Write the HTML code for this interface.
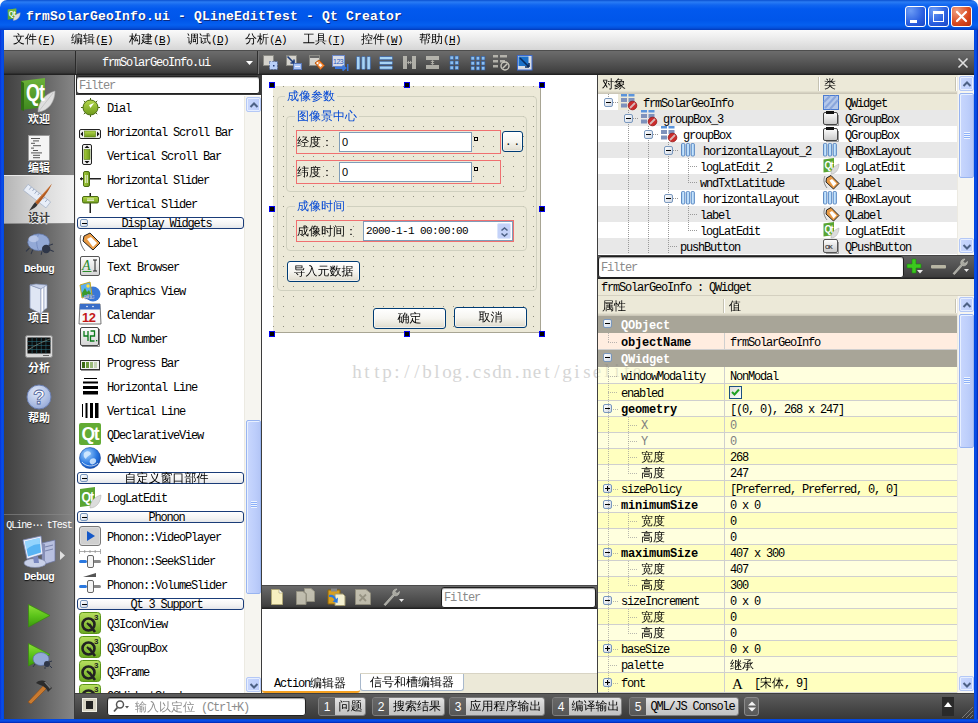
<!DOCTYPE html>
<html><head><meta charset="utf-8"><title>Qt Creator</title>
<style>
*{box-sizing:border-box;margin:0;padding:0}
html,body{width:978px;height:723px;overflow:hidden;background:#fff}
body{font:12px/14px "Liberation Mono","WenQuanYi Zen Hei",monospace;letter-spacing:-1.2px;color:#000;position:relative}
.a{position:absolute}
.c{letter-spacing:0}
.nw{white-space:nowrap}
svg{position:absolute;overflow:visible}
/* title */
#title{left:0;top:0;width:978px;height:30px;background:linear-gradient(#0a50d0 0,#2a7cf4 2px,#1166f0 5px,#0259ee 9px,#0056ea 20px,#0560f0 25px,#0450dc 28px,#0339b8 30px);border-radius:7px 7px 0 0}
#title .t{left:26px;top:9px;color:#fff;font:bold 13px/16px "Liberation Mono","WenQuanYi Zen Hei",monospace;letter-spacing:0.2px;text-shadow:1px 1px 0 #0a2a80;white-space:nowrap}
.tb{top:6px;width:21px;height:21px;border:1px solid #fff;border-radius:3px;background:radial-gradient(circle at 25% 20%,#6c9cf5,#2a5fe0 60%,#1b47c4)}
#frameL{left:0;top:30px;width:4px;height:693px;background:linear-gradient(90deg,#0831d9,#0a50e8 50%,#0046e0)}
#frameR{left:974px;top:30px;width:4px;height:693px;background:linear-gradient(90deg,#0046e0,#0a50e8 50%,#0025b0)}
#frameB{left:0;top:719px;width:978px;height:4px;background:linear-gradient(#0046e0,#0a50e8 50%,#0025b0)}
#menubar{left:4px;top:30px;width:970px;height:20px;background:linear-gradient(#fafafa,#ebebeb 45%,#d6d6d6)}
#menubar span.m{position:absolute;top:3px;white-space:nowrap}
#toolbar{left:4px;top:50px;width:970px;height:25px;background:linear-gradient(#2e2e2e 0,#6c6c6c 1px,#5a5a5a 40%,#444 80%,#3a3a3a 23px,#222 24px)}
#side{left:4px;top:75px;width:71px;height:644px;background:linear-gradient(90deg,#404040,#606060 50%,#858585 69.5px,#3a3a3a 70px)}
#side .lbl{position:absolute;left:0;width:70px;text-align:center;color:#fff;font-weight:bold;font-size:11px;line-height:12px;text-shadow:0 1px 1px #1a1a1a;letter-spacing:-0.6px}
#side .lbl .c{letter-spacing:0}
#status{left:75px;top:693px;width:899px;height:26px;background:linear-gradient(#202020 0,#5c5c5c 1px,#4a4a4a 50%,#383838)}
#wbox{left:76px;top:75px;width:185px;box-shadow:-1px 0 0 #f0f0f0;height:618px;background:#fff;overflow:hidden}
.filt{background:#fff;border:1px solid #1e1e1e;border-radius:3px;box-shadow:inset 0 1px 1px #999;color:#8a8a8a;padding-left:2px;padding-top:1px}
.wi{position:absolute;left:31px;white-space:nowrap;line-height:14px;margin-top:2px}
.wh{position:absolute;left:1px;width:167px;height:12px;border:1px solid #1a3c78;border-radius:3px;background:linear-gradient(#fff,#f4f4f4 60%,#e4e6ea);text-align:center;line-height:13px;padding-left:12px;white-space:nowrap}
.pm{position:absolute;width:9px;height:9px;border:1px solid #7a98be;border-radius:2px;background:linear-gradient(135deg,#fff,#d0d8e4)}
.pm:before{content:"";position:absolute;left:1px;top:3px;width:5px;height:1px;background:#000}
.pm.plus:after{content:"";position:absolute;left:3px;top:1px;width:1px;height:5px;background:#000}
.sb{position:absolute;width:17px;background:#f6f5f0;border-left:1px solid #eceae2}
.sbb{position:absolute;left:1px;width:15px;height:15px;border:1px solid #b4c8f6;border-radius:2px;background:linear-gradient(90deg,#cad8fd,#bccdfb);box-shadow:inset 0 0 0 1px #e6eeff}
.sbt{position:absolute;left:1px;width:15px;border:1px solid #98b4f0;border-radius:2px;background:linear-gradient(90deg,#c9d7fd,#bdcefb 60%,#b4c6f6);box-shadow:inset 1px 1px 0 #e8f0ff}
#canvas{left:262px;top:75px;width:335px;height:510px;background:#fff;overflow:hidden}
.hd{position:absolute;width:6px;height:6px;background:#000;border:1px solid #0000f0}
#form{position:absolute;left:11px;top:11px;width:268px;height:247px;background-color:#ece9d8;background-image:radial-gradient(circle at 0.5px 0.5px,#8f8d7e 0.5px,transparent 0.85px);background-size:10px 10px;border-right:1px solid #a8a594;border-bottom:1px solid #a8a594}
.gb{position:absolute;border:1px solid #d0d0bf;border-radius:4px}
.gbt{position:absolute;background:#ece9d8;color:#0046d5;padding:0 2px;line-height:14px;height:12px;white-space:nowrap;letter-spacing:0}
.red{position:absolute;border:1px solid #f07070}
.le{position:absolute;background:#fff;border:1px solid #7f9db9;font:11px/19px "Liberation Mono",monospace;letter-spacing:-0.6px;padding-left:2px;white-space:nowrap}
.btn{position:absolute;border:1px solid #003c74;border-radius:3px;background:linear-gradient(#fff,#f6f5f0 50%,#e4e1d4 90%,#d6d0c5);text-align:center;letter-spacing:0;white-space:nowrap;box-shadow:inset 0 0 0 1px rgba(255,255,255,.6)}
#aed{left:262px;top:585px;width:335px;height:108px;background:#fff}
#aed .tbar{position:absolute;left:0;top:0;width:335px;height:24px;background:linear-gradient(#2a2a2a 0,#6a6a6a 1px,#585858 40%,#444 80%,#3a3a3a 22px,#222 23px)}
#aed .tabs{position:absolute;left:0;top:88px;width:335px;height:20px;background:#ece9d8;border-top:1px solid #d8d4c4}
#right{left:597px;top:75px;width:377px;height:618px;background:#fff;border-left:1px solid #404040;overflow:hidden}
.hdr{position:absolute;left:0;width:376px;background:linear-gradient(#ece9d8 0,#ece9d8 calc(100% - 3px),#e2dfce calc(100% - 3px),#e2dfce calc(100% - 2px),#d6d2c2 calc(100% - 2px),#d6d2c2 calc(100% - 1px),#cbc7b8 calc(100% - 1px))}
.hdr .c{position:absolute;top:3px}
.hdr i{position:absolute;top:2px;width:2px;height:14px;border-left:1px solid #c5c2b2;border-right:1px solid #fff}
.tr{position:absolute;left:0;width:359px;height:16px;line-height:16px;white-space:nowrap}
.tr span{position:absolute;top:1px;line-height:14px}
.vd{position:absolute;width:1px;background-image:linear-gradient(#999 50%,transparent 50%);background-size:1px 2px}
.hdl{position:absolute;height:1px;background-image:linear-gradient(90deg,#999 50%,transparent 50%);background-size:2px 1px}
.pr{position:absolute;left:0;width:359px;white-space:nowrap;border-bottom:1px solid #cfcfcf}
.pr>span{position:absolute;line-height:14px;margin-top:1px}
.pr i{position:absolute;left:126px;top:0;bottom:0;width:1px;background:#cfcfcf}

.t1{margin-top:2px}
.sl{font-family:"Liberation Mono","Noto Sans CJK SC",sans-serif}
.wm{font:19px/20px "Liberation Serif",serif;letter-spacing:0;color:#d6d6d6}
.wm b{display:inline-block;width:10px;text-align:center;font-weight:normal}

</style></head><body>
<div class="a" id="title"><div class="a t">frmSolarGeoInfo.ui - QLineEditTest - Qt Creator</div>
<svg style="left:7px;top:8px" width="14" height="14" viewBox="0 0 18 18"><path d="M1 2 L12 0.5 L12 13 L1 15Z" fill="#5aa532"/><path d="M1 2 L12 0.5 L12 4 L1 6Z" fill="#7cc04a" opacity=".6"/><path d="M8 16 C8 11 12 7 17 6 C17 11 14 16 8 16Z" fill="#dcdcdc" stroke="#999" stroke-width=".5"/><text x="2.2" y="10.5" font-family="Liberation Sans,sans-serif" font-weight="bold" font-size="8.5" fill="#fff" letter-spacing="-0.6">Qt</text></svg>
<div class="a tb" style="left:905px"><div class="a" style="left:4px;top:13px;width:7px;height:3px;background:#fff"></div></div>
<div class="a tb" style="left:928px"><div class="a" style="left:4px;top:4px;width:11px;height:11px;border:1px solid #fff;border-top-width:3px"></div></div>
<div class="a tb" style="left:951px;background:radial-gradient(circle at 25% 20%,#f0a080,#d8481e 60%,#b8300c)"><svg style="left:3px;top:3px" width="13" height="13" viewBox="0 0 13 13"><path d="M2 2 L11 11 M11 2 L2 11" stroke="#fff" stroke-width="2.2" stroke-linecap="round"/></svg></div></div>
<div class="a" id="frameL"></div><div class="a" id="frameR"></div><div class="a" id="frameB"></div>
<div class="a" id="menubar"><span class="m" style="left:9px"><span class="c">文件</span><span style="font-size:11px;letter-spacing:-0.6px">(<u>F</u>)</span></span><span class="m" style="left:67px"><span class="c">编辑</span><span style="font-size:11px;letter-spacing:-0.6px">(<u>E</u>)</span></span><span class="m" style="left:125px"><span class="c">构建</span><span style="font-size:11px;letter-spacing:-0.6px">(<u>B</u>)</span></span><span class="m" style="left:183px"><span class="c">调试</span><span style="font-size:11px;letter-spacing:-0.6px">(<u>D</u>)</span></span><span class="m" style="left:241px"><span class="c">分析</span><span style="font-size:11px;letter-spacing:-0.6px">(<u>A</u>)</span></span><span class="m" style="left:299px"><span class="c">工具</span><span style="font-size:11px;letter-spacing:-0.6px">(<u>T</u>)</span></span><span class="m" style="left:357px"><span class="c">控件</span><span style="font-size:11px;letter-spacing:-0.6px">(<u>W</u>)</span></span><span class="m" style="left:415px"><span class="c">帮助</span><span style="font-size:11px;letter-spacing:-0.6px">(<u>H</u>)</span></span></div>
<div class="a" id="toolbar"></div>
<div class="a" id="side"></div>
<div class="a" id="status"></div>
<div class="a nw" style="left:102px;top:56px;color:#fff;line-height:14px">frmSolarGeoInfo.ui</div><svg style="left:246px;top:61px" width="7" height="4"><path d="M0 0H7L3.5 4Z" fill="#fff"/></svg><div class="a" style="left:75px;top:51px;width:1px;height:23px;background:#2a2a2a"></div><div class="a" style="left:76px;top:51px;width:1px;height:23px;background:#6a6a6a;opacity:.5"></div><div class="a" style="left:257px;top:51px;width:1px;height:23px;background:#2e2e2e"></div><div class="a" style="left:258px;top:51px;width:1px;height:23px;background:#747474"></div><svg style="left:263px;top:55px" width="17" height="16" viewBox="0 0 17 16"><rect x="0.5" y="0.5" width="10" height="10" fill="#d4d2cc" stroke="#8a8a84"/><rect x="6.5" y="6.5" width="8" height="8" fill="#b9d0f8" stroke="#34508c" stroke-dasharray="1 2"/><rect x="10" y="10" width="1.5" height="1.5" fill="#223a78"/></svg><svg style="left:286px;top:55px" width="16" height="16" viewBox="0 0 16 16"><rect x="0.5" y="0.5" width="10" height="10" fill="#d4d2cc" stroke="#8a8a84"/><rect x="7.5" y="8.5" width="8" height="6" fill="#a9c4f5" stroke="#5a78b8"/><rect x="9" y="11" width="5" height="1" fill="#eef"/><path d="M1.5 1.5L8 8M8 8V4.5M8 8H4.500" stroke="#1e3c78" stroke-width="1.6" fill="none"/></svg><svg style="left:309px;top:55px" width="16" height="16" viewBox="0 0 16 16"><rect x="0.500" y="0.5" width="10" height="10" fill="#d4d2cc" stroke="#8a8a84"/><rect x="1" y="1" width="9" height="2" fill="#666"/><path d="M6 8L10 5L15.500 10.500L11.500 14.500Z" fill="#f08a3c" stroke="#c05a10"/><circle cx="8.5" cy="8" r="1" fill="#fff"/><rect x="10" y="9" width="3" height="2.5" fill="#fff" transform="rotate(45 11.5 10)"/></svg><svg style="left:332px;top:55px" width="17" height="16" viewBox="0 0 17 16"><rect x="0.5" y="0.5" width="12" height="11" fill="#d8dce6" stroke="#6a86c8"/><text x="1" y="9" font-family="Liberation Sans,sans-serif" font-size="7" fill="#2858c0" letter-spacing="-0.5">123</text><path d="M3 13H13M10.500 10.500L13.500 13L10.500 15.500" stroke="#3c78dc" stroke-width="1.8" fill="none"/><rect x="15" y="9" width="1.5" height="7" fill="#3c78dc"/></svg><svg style="left:356px;top:56px" width="15" height="14" viewBox="0 0 15 14"><g fill="#a8d4f4" stroke="#3c64a4" stroke-width=".8"><rect x="0.5" y="0.5" width="3.5" height="13" rx="1"/><rect x="5.700" y="0.5" width="3.5" height="13" rx="1"/><rect x="10.900" y="0.5" width="3.500" height="13" rx="1"/></g></svg><svg style="left:379px;top:56px" width="14" height="14" viewBox="0 0 14 14"><g fill="#a8d4f4" stroke="#3c64a4" stroke-width=".8"><rect x="0.5" y="0.5" width="13" height="3.2" rx="1"/><rect x="0.5" y="5.3" width="13" height="3.2" rx="1"/><rect x="0.5" y="10.100" width="13" height="3.2" rx="1"/></g></svg><svg style="left:403px;top:56px" width="14" height="14" viewBox="0 0 14 14"><g opacity=".7" fill="#d8d6cc"><rect x="0" y="0" width="4" height="13"/><rect x="9" y="0" width="4" height="13"/><path d="M4 6.500L6 4.500V8.500ZM9 6.500L7 4.500V8.500Z"/><rect x="5" y="6" width="3" height="1"/></g></svg><svg style="left:426px;top:56px" width="14" height="14" viewBox="0 0 14 14"><g opacity=".7" fill="#d8d6cc"><rect x="0" y="0" width="13" height="4"/><rect x="0" y="9" width="13" height="4"/><path d="M6.500 4L4.500 6H8.500ZM6.500 9L4.500 7H8.500Z"/><rect x="6" y="5" width="1" height="3"/></g></svg><svg style="left:450px;top:56px" width="10" height="15" viewBox="0 0 10 15"><rect x="0" y="0" width="3.5" height="3.5" fill="#8cc0f0" stroke="#3060a8" stroke-width=".6"/><rect x="5" y="0" width="3.5" height="3.5" fill="#8cc0f0" stroke="#3060a8" stroke-width=".6"/><rect x="0" y="5" width="3.5" height="3.5" fill="#8cc0f0" stroke="#3060a8" stroke-width=".6"/><rect x="5" y="5" width="3.5" height="3.5" fill="#8cc0f0" stroke="#3060a8" stroke-width=".6"/><rect x="0" y="10" width="3.5" height="3.5" fill="#8cc0f0" stroke="#3060a8" stroke-width=".6"/><rect x="5" y="10" width="3.5" height="3.5" fill="#8cc0f0" stroke="#3060a8" stroke-width=".6"/></svg><svg style="left:471px;top:56px" width="15" height="15" viewBox="0 0 15 15"><rect x="0.0" y="0.5" width="3.5" height="3.5" fill="#8cc0f0" stroke="#3060a8" stroke-width=".6"/><rect x="5.2" y="0.5" width="3.5" height="3.5" fill="#8cc0f0" stroke="#3060a8" stroke-width=".6"/><rect x="10.4" y="0.5" width="3.5" height="3.5" fill="#8cc0f0" stroke="#3060a8" stroke-width=".6"/><rect x="0.0" y="5.5" width="3.5" height="3.5" fill="#8cc0f0" stroke="#3060a8" stroke-width=".6"/><rect x="5.2" y="5.5" width="3.5" height="3.5" fill="#8cc0f0" stroke="#3060a8" stroke-width=".6"/><rect x="10.4" y="5.5" width="3.5" height="3.5" fill="#8cc0f0" stroke="#3060a8" stroke-width=".6"/><rect x="0.0" y="10.5" width="3.5" height="3.5" fill="#8cc0f0" stroke="#3060a8" stroke-width=".6"/><rect x="5.2" y="10.5" width="3.5" height="3.5" fill="#8cc0f0" stroke="#3060a8" stroke-width=".6"/><rect x="10.4" y="10.5" width="3.5" height="3.5" fill="#8cc0f0" stroke="#3060a8" stroke-width=".6"/></svg><svg style="left:493px;top:55px" width="17" height="16" viewBox="0 0 17 16"><g opacity=".7" fill="#d8d6cc"><rect x="0" y="0" width="5" height="2.500"/><rect x="7" y="0" width="7" height="2.500"/><rect x="0" y="5" width="5" height="2.5"/><rect x="7" y="5" width="5" height="2.5"/><rect x="0" y="10" width="5" height="2.5"/></g><circle cx="12" cy="11" r="4" fill="none" stroke="#c8c6bc" stroke-width="1.4"/><path d="M9.500 13.500L14.500 8.500" stroke="#c8c6bc" stroke-width="1.4"/></svg><svg style="left:517px;top:55px" width="16" height="16" viewBox="0 0 16 16"><rect x="0.5" y="0.5" width="14.500" height="14.500" fill="#d8dce4" stroke="#3a6ad0"/><rect x="1.500" y="1.5" width="10" height="9.500" fill="#1a70c8"/><path d="M3 3L12 12M12 12V8M12 12H8" stroke="#0a2c60" stroke-width="1.6" fill="none"/></svg><svg style="left:958px;top:58px" width="10" height="10"><path d="M0.5 0.500L9.500 9.500M9.500 .5L.5 9.500" stroke="#e0e0e0" stroke-width="1.6"/></svg>
<div class="a" style="left:4px;top:175px;width:70px;height:49px;background:linear-gradient(90deg,#b4b4b4,#d8d8d8 50%,#efefef);border-top:1px solid #e8e8e8;border-bottom:1px solid #8a8a8a"></div><div class="a nw sl" style="left:4px;top:114px;width:70px;text-align:center;font-weight:bold;font-size:11px;line-height:12px;color:#fff;text-shadow:0 1px 1px #111;letter-spacing:-0.6px"><span class="c">欢迎</span></div><div class="a nw sl" style="left:4px;top:163px;width:70px;text-align:center;font-weight:bold;font-size:11px;line-height:12px;color:#fff;text-shadow:0 1px 1px #111;letter-spacing:-0.6px"><span class="c">编辑</span></div><div class="a nw sl" style="left:4px;top:213px;width:70px;text-align:center;font-weight:bold;font-size:11px;line-height:12px;color:#3a3a3a;text-shadow:0 1px 0 #fff"><span class="c">设计</span></div><div class="a nw sl" style="left:4px;top:263px;width:70px;text-align:center;font-weight:bold;font-size:11px;line-height:12px;color:#fff;text-shadow:0 1px 1px #111;letter-spacing:-0.6px">Debug</div><div class="a nw sl" style="left:4px;top:313px;width:70px;text-align:center;font-weight:bold;font-size:11px;line-height:12px;color:#fff;text-shadow:0 1px 1px #111;letter-spacing:-0.6px"><span class="c">项目</span></div><div class="a nw sl" style="left:4px;top:363px;width:70px;text-align:center;font-weight:bold;font-size:11px;line-height:12px;color:#fff;text-shadow:0 1px 1px #111;letter-spacing:-0.6px"><span class="c">分析</span></div><div class="a nw sl" style="left:4px;top:413px;width:70px;text-align:center;font-weight:bold;font-size:11px;line-height:12px;color:#fff;text-shadow:0 1px 1px #111;letter-spacing:-0.6px"><span class="c">帮助</span></div><svg style="left:20px;top:78px" width="36" height="36" viewBox="0 0 36 36" ><defs><linearGradient id="qg" x1="0" y1="0" x2="0" y2="1"><stop offset="0" stop-color="#6db33a"/><stop offset="1" stop-color="#3f8a1e"/></linearGradient></defs><path d="M1 3L25 0V29L1 32Z" fill="url(#qg)"/><path d="M1 3L4 5V33L1 32Z" fill="#2f6e14"/><path d="M18 34C18 24 25 16 35 13C35 23 29 33 18 34Z" fill="#dedede" stroke="#aaa" stroke-width=".6"/><path d="M19 33L33 15" stroke="#bbb" stroke-width=".7"/><text x="6" y="22.500" font-family="Liberation Sans,sans-serif" font-weight="bold" font-size="23" fill="#fff" textLength="18" lengthAdjust="spacingAndGlyphs">Qt</text></svg><svg style="left:28px;top:135px" width="22" height="26" viewBox="0 0 22 26" ><rect x="0.5" y="0.5" width="21" height="25" fill="#f4f4f4" stroke="#9a9a9a"/><rect x="3" y="3.0" width="9" height="1" fill="#555"/><rect x="5" y="5.4" width="6" height="1" fill="#555"/><rect x="3" y="7.8" width="4" height="1" fill="#555"/><rect x="5" y="10.2" width="8" height="1" fill="#555"/><rect x="3" y="12.6" width="3" height="1" fill="#555"/><rect x="5" y="15.0" width="5" height="1" fill="#555"/><rect x="3" y="17.4" width="11" height="1" fill="#555"/><rect x="5" y="19.8" width="7" height="1" fill="#555"/><rect x="5" y="22.2" width="7" height="1" fill="#555"/></svg><svg style="left:25px;top:183px" width="36" height="34" viewBox="0 0 36 34" ><g transform="scale(.84)"><g transform="rotate(38 14 16)"><rect x="-3" y="11" width="34" height="9" fill="#e8eef8" stroke="#9aa8c0" stroke-width=".7"/><path d="M2 11v4M6 11v3M10 11v4M14 11v3M18 11v4M22 11v3M26 11v4" stroke="#8090b0" stroke-width=".8"/></g><path d="M32 1C26 8 18 17 12 23L15 26C21 19 29 9 32 1Z" fill="#b05a20"/><path d="M32 1C28 7 20 16 14 22L12 23C18 17 26 8 32 1Z" fill="#e08a48"/><path d="M12 23L15 26C13 29 10 31 5 33C8 29 9 26 12 23Z" fill="#333"/></g></svg><svg style="left:26px;top:233px" width="34" height="28" viewBox="0 0 34 28" ><g transform="scale(.84)"><ellipse cx="15" cy="11" rx="13" ry="10" fill="#93a9d6" stroke="#5a6fa0" stroke-width=".8"/><path d="M15 1.500C12 8 12 14 15 21" stroke="#6a80b4" stroke-width=".8" fill="none"/><ellipse cx="9" cy="7" rx="6" ry="4" fill="#c4d2ee" opacity=".7"/><circle cx="24" cy="19" r="5" fill="#2e3648"/><path d="M4 18L0 22M8 20L6 25M19 22L18 26M27 15L32 13M28 20L33 22" stroke="#2e3648" stroke-width="1.2"/></g></svg><svg style="left:29px;top:283px" width="20" height="32" viewBox="0 0 20 32" ><path d="M1 2L12 6V31L1 25Z" fill="#dfe6f4" stroke="#8796b8" stroke-width=".8"/><path d="M12 6L15 3V27L12 31Z" fill="#fff" stroke="#8796b8" stroke-width=".6"/><path d="M15 3L18 2V25L15 27Z" fill="#eef2fa" stroke="#8796b8" stroke-width=".6"/><path d="M1 2L7 1L18 2L12 6Z" fill="#c8d2ea" stroke="#8796b8" stroke-width=".6"/></svg><svg style="left:25px;top:335px" width="28" height="23" viewBox="0 0 28 23" ><rect x="0.5" y="0.5" width="27" height="22" rx="2" fill="#d8d8d8" stroke="#888"/><rect x="2.5" y="2.500" width="23" height="16" fill="#0c0c0c"/><path d="M7.1 2.500v16" stroke="#2a6a78" stroke-width=".6"/><path d="M11.7 2.500v16" stroke="#2a6a78" stroke-width=".6"/><path d="M16.3 2.500v16" stroke="#2a6a78" stroke-width=".6"/><path d="M20.9 2.500v16" stroke="#2a6a78" stroke-width=".6"/><path d="M2.500 6.5h23" stroke="#2a6a78" stroke-width=".6"/><path d="M2.500 10.5h23" stroke="#2a6a78" stroke-width=".6"/><path d="M2.500 14.5h23" stroke="#2a6a78" stroke-width=".6"/><path d="M3 15C8 12 12 9 25 4" stroke="#7a8a80" stroke-width=".7" fill="none"/><rect x="18" y="20" width="6" height="1" fill="#666"/></svg><svg style="left:26px;top:384px" width="25" height="25" viewBox="0 0 25 25" ><defs><radialGradient id="hg" cx=".4" cy=".3" r=".8"><stop offset="0" stop-color="#dfe8fa"/><stop offset="1" stop-color="#8fa4d4"/></radialGradient></defs><circle cx="13" cy="13" r="12" fill="url(#hg)" stroke="#6a7eb0"/><text x="7" y="20" font-family="Liberation Sans,sans-serif" font-weight="bold" font-size="20" fill="#fff" stroke="#4a5e98" stroke-width=".8">?</text></svg><div class="a" style="left:4px;top:514px;width:70px;height:1px;background:#8a8a8a;opacity:.6"></div><div class="a nw" style="left:4px;top:520px;width:70px;text-align:center;color:#fff;font-size:11px;line-height:12px;letter-spacing:-1px;font-size:10px">QLine<span style="letter-spacing:-2.5px">···</span> tTest</div><svg style="left:22px;top:535px" width="36" height="34" viewBox="0 0 36 34" ><path d="M20 8L33 5V26L20 30Z" fill="#b8c0e0" stroke="#6a74a0" stroke-width=".7"/><path d="M20 8L23 9V31L20 30Z" fill="#8890b8"/><path d="M23 12l8 -2M23 16l8 -2" stroke="#6a74a0" stroke-width=".8"/><ellipse cx="13" cy="28" rx="11" ry="4.500" fill="#c8d0e8" stroke="#7a84a8" stroke-width=".6"/><path d="M11 22L16 21L17 28H12Z" fill="#7a88c0"/><path d="M1 5L19 1L21 19L5 24Z" fill="#e8eefc" stroke="#7a84b0" stroke-width=".8"/><path d="M3 6.500L17.500 3L19 17.500L6 21.500Z" fill="#58b4f4"/><path d="M3 6.500L17.500 3L18 9C12 9 7 12 4 15Z" fill="#a4dcff" opacity=".8"/></svg><svg style="left:60px;top:551px" width="5" height="9"><path d="M0 0L5 4.500L0 9Z" fill="#e0e0e0"/></svg><div class="a nw" style="left:4px;top:571px;width:70px;text-align:center;font-weight:bold;font-size:11px;line-height:12px;color:#fff;text-shadow:0 1px 1px #111;letter-spacing:-0.6px">Debug</div><svg style="left:28px;top:604px" width="23" height="24" viewBox="0 0 23 24" ><defs><linearGradient id="rg" x1="0" y1="0" x2="0" y2="1"><stop offset="0" stop-color="#8ee03a"/><stop offset=".5" stop-color="#5cc41a"/><stop offset="1" stop-color="#3a9a0c"/></linearGradient></defs><path d="M0.500 0.500L22 11.500L0.500 23Z" fill="url(#rg)" stroke="#3a8a10" stroke-width=".8"/></svg><svg style="left:28px;top:643px" width="24" height="26" viewBox="0 0 24 26" ><path d="M0.500 0.500L22 11.500L0.500 23Z" fill="url(#rg)" stroke="#3a8a10" stroke-width=".8"/><ellipse cx="13" cy="16" rx="8" ry="6.500" fill="#93a9d6" stroke="#5a6fa0" stroke-width=".7"/><circle cx="19" cy="21" r="3" fill="#2e3648"/><path d="M7 21L5 24M17 24L17 26M21 19L24 18M22 23L24 25" stroke="#2e3648" stroke-width="1"/></svg><svg style="left:26px;top:680px" width="27" height="24" viewBox="0 0 27 24" ><path d="M2 22L18 5L21 8L5 24Z" fill="#c87a30" stroke="#8a4a14" stroke-width=".6"/><path d="M10 3C13 0 17 0 20 2L26 8L22 12C21 9 18 6 14 5Z" fill="#2c2c2c"/><path d="M18 2L20 2L25 7L24 9Z" fill="#777"/></svg>
<div class="a" id="wbox"><div class="a" style="left:0;top:0;width:185px;height:20px;background:#3a3a3a"></div><div class="a filt" style="left:0;top:1px;width:184px;height:18px;line-height:16px;border-color:#222">Filter</div><svg width="0" height="0"><defs><linearGradient id="gr" x1="0" y1="0" x2="0" y2="1"><stop offset="0" stop-color="#b4d84a"/><stop offset="1" stop-color="#6e9a1c"/></linearGradient><linearGradient id="grh" x1="0" y1="0" x2="1" y2="0"><stop offset="0" stop-color="#a6cc3c"/><stop offset="1" stop-color="#6e9a1c"/></linearGradient><radialGradient id="gl" cx=".35" cy=".3" r=".8"><stop offset="0" stop-color="#9ed0ff"/><stop offset=".6" stop-color="#2a78e0"/><stop offset="1" stop-color="#0c48b0"/></radialGradient><linearGradient id="q3" x1="0" y1="0" x2="0" y2="1"><stop offset="0" stop-color="#b8e060"/><stop offset="1" stop-color="#6aa820"/></linearGradient><linearGradient id="bt" x1="0" y1="0" x2="0" y2="1"><stop offset="0" stop-color="#fdfdfd"/><stop offset="1" stop-color="#d4d4d4"/></linearGradient></defs></svg><svg style="left:5px;top:23px" width="19" height="19" viewBox="0 0 19 19" ><g stroke="#4a6a14" stroke-width="1"><path d="M9.500 0v19M0 9.500h19M2.800 2.800l13.400 13.400M16.200 2.800L2.800 16.200"/></g><circle cx="9.500" cy="9.500" r="7.500" fill="url(#gr)" stroke="#4a6a14"/><path d="M9.500 10L13 5L8 7Z" fill="#fff"/></svg><div class="wi" style="top:25px">Dial</div><svg style="left:3px;top:54px" width="22" height="10" viewBox="0 0 22 10" ><rect x="0.5" y="0.5" width="21" height="9" rx="1.500" fill="#f0f0f0" stroke="#222"/><rect x="5.500" y="2" width="11" height="6" fill="url(#gr)" stroke="#567a14" stroke-width=".6"/><path d="M4 2.500V7.500L1.500 5ZM18 2.500V7.500L20.500 5Z" fill="#111"/></svg><div class="wi" style="top:49px">Horizontal Scroll Bar</div><svg style="left:6px;top:69px" width="10" height="21" viewBox="0 0 10 21" ><rect x="0.5" y="0.5" width="9" height="20" rx="1.500" fill="#f0f0f0" stroke="#222"/><rect x="2" y="5.500" width="6" height="10" fill="url(#grh)" stroke="#567a14" stroke-width=".6"/><path d="M2.500 4H7.500L5 1.500ZM2.500 17H7.500L5 19.500Z" fill="#111"/></svg><div class="wi" style="top:73px">Vertical Scroll Bar</div><svg style="left:4px;top:96px" width="21" height="16" viewBox="0 0 21 16" ><rect x="0" y="7" width="21" height="1.500" fill="#222"/><path d="M0 7.700L2 5.700V9.700Z" fill="#222"/><rect x="3.500" y="0.500" width="6" height="15" rx="1.500" fill="url(#grh)" stroke="#4a6a14"/><path d="M5.700 4v8M7.300 4v8" stroke="#fff" stroke-width=".8"/></svg><div class="wi" style="top:97px">Horizontal Slider</div><svg style="left:6px;top:118px" width="17" height="20" viewBox="0 0 17 20" ><rect x="7.500" y="0" width="1.500" height="20" fill="#222"/><rect x="0.500" y="3.500" width="16" height="6.500" rx="1.500" fill="url(#gr)" stroke="#4a6a14"/><path d="M5 6h7M5 7.600h7" stroke="#fff" stroke-width=".8"/></svg><div class="wi" style="top:121px">Vertical Slider</div><div class="wh" style="top:142px">Display Widgets<div class="pm" style="left:2px;top:1px;width:8px;height:8px"></div></div><svg style="left:3px;top:157px" width="22" height="20" viewBox="0 0 22 20" ><path d="M2 3C0 8 2 14 6 19" stroke="#333" stroke-width=".7" fill="none"/><path d="M5 4L11 1L21 11L14 18L4 9Z" fill="#e89a44" stroke="#222" stroke-width="1"/><path d="M8 7L12 5L18 11L14 15Z" fill="#fff"/></svg><div class="wi" style="top:160px">Label</div><svg style="left:4px;top:181px" width="20" height="20" viewBox="0 0 20 20" ><rect x="0.5" y="0.5" width="19" height="19" rx="1.500" fill="url(#bt)" stroke="#555"/><text x="2" y="14" font-family="Liberation Serif,serif" font-style="italic" font-size="14" fill="#2a8a2a">A</text><path d="M2.500 15.500h9" stroke="#2a8a2a" stroke-width="1"/><path d="M13 4h4M15 4v11M13 15h4" stroke="#222" stroke-width="1" fill="none"/></svg><div class="wi" style="top:184px">Text Browser</div><svg style="left:3px;top:206px" width="22" height="21" viewBox="0 0 22 21" ><circle cx="14" cy="13" r="7.500" fill="#3a78d8"/><path d="M1 4L11 1L13 14L3 17Z" fill="#5ab0f0" stroke="#c8a820" stroke-width="1"/><circle cx="9" cy="5" r="1.700" fill="#ffe040"/><path d="M3 12L6 7L8 11L10 9L12 13L3.500 16Z" fill="#3a9a2a"/><text x="5" y="17.500" font-family="Liberation Sans,sans-serif" font-weight="bold" font-size="7.500" fill="#fff" stroke="#3060b0" stroke-width=".3">abc</text></svg><div class="wi" style="top:208px">Graphics View</div><svg style="left:3px;top:228px" width="22" height="22" viewBox="0 0 22 22" ><path d="M1 1H21L22 21H0Z" fill="#f8f8f8" stroke="#555" stroke-width=".8"/><path d="M1 1H21L21.300 6.500H0.700Z" fill="#3a6ec8"/><circle cx="8" cy="3.500" r=".8" fill="#fff"/><circle cx="14" cy="3.500" r=".8" fill="#fff"/><text x="3" y="19" font-family="Liberation Sans,sans-serif" font-weight="bold" font-size="13" fill="#c41818" letter-spacing="-0.500">12</text></svg><div class="wi" style="top:232px">Calendar</div><svg style="left:4px;top:252px" width="20" height="20" viewBox="0 0 20 20" ><rect x="0.5" y="0.5" width="18" height="18" rx="1.500" fill="url(#bt)" stroke="#444"/><path d="M19.500 2V19.500H2" stroke="#888" fill="none"/><path d="M4 4v5h4M8 4v10M10.500 4h4v5h-4v5h4" stroke="#0a7a1a" stroke-width="1.300" fill="none"/><rect x="16" y="13" width="1.300" height="1.300" fill="#0a7a1a"/></svg><div class="wi" style="top:256px">LCD Number</div><svg style="left:4px;top:285px" width="20" height="11" viewBox="0 0 20 11" ><rect x="0.5" y="0.5" width="19" height="9" fill="#f2f2f2" stroke="#333"/><rect x="2" y="2" width="3" height="6" fill="#3a6a14"/><rect x="6" y="2" width="3" height="6" fill="#6a9a3a"/><rect x="10" y="2" width="3" height="6" fill="#9aba7a"/><rect x="14" y="2" width="3" height="6" fill="#c4d4b4"/><path d="M1 10.500H20" stroke="#999"/></svg><div class="wi" style="top:280px">Progress Bar</div><svg style="left:7px;top:303px" width="15" height="17" viewBox="0 0 15 17" ><rect x="1" y="0" width="13" height="1" fill="#000"/><rect x="0" y="3.500" width="15" height="2" fill="#000"/><rect x="0" y="8" width="15" height="3" fill="#000"/><rect x="0" y="13" width="15" height="3.500" fill="#000"/></svg><div class="wi" style="top:304px">Horizontal Line</div><svg style="left:6px;top:328px" width="17" height="15" viewBox="0 0 17 15" ><rect x="0" y="1" width="1" height="13" fill="#000"/><rect x="3.500" y="0" width="2" height="15" fill="#000"/><rect x="8" y="0" width="3" height="15" fill="#000"/><rect x="13" y="0" width="3.500" height="15" fill="#000"/></svg><div class="wi" style="top:328px">Vertical Line</div><svg style="left:3px;top:348px" width="22" height="22" viewBox="0 0 22 22" ><path d="M0 2Q0 0 2 0H20Q22 0 22 2V20Q22 22 20 22H2Q0 22 0 20Z" fill="#62ab34"/><text x="2.500" y="17" font-family="Liberation Sans,sans-serif" font-weight="bold" font-size="18" fill="#fff" textLength="17" lengthAdjust="spacingAndGlyphs">Qt</text></svg><div class="wi" style="top:352px">QDeclarativeView</div><svg style="left:3px;top:372px" width="22" height="22" viewBox="0 0 22 22" ><circle cx="11" cy="11" r="10.500" fill="url(#gl)" stroke="#1a4aa0" stroke-width=".6"/><path d="M5 6C8 3 12 4 12 7C10 9 8 9 7 12C5 11 4 9 5 6ZM12 12C15 10 18 12 17 15C15 18 12 18 11 16C10 14 11 13 12 12Z" fill="#d8ecff" opacity=".85"/><path d="M3 15C6 19 14 21 19 16" stroke="#fff" stroke-width="1" fill="none" opacity=".7"/></svg><div class="wi" style="top:376px">QWebView</div><div class="wh" style="top:397px"><span class="c">自定义窗口部件</span><div class="pm" style="left:2px;top:1px;width:8px;height:8px"></div></div><svg style="left:3px;top:412px" width="22" height="22" viewBox="0 0 22 22" ><path d="M1 2L16 0V18L1 20Z" fill="#5aa532"/><text x="2.5" y="15" font-family="Liberation Sans,sans-serif" font-weight="bold" font-size="14" fill="#fff" textLength="11.500" lengthAdjust="spacingAndGlyphs">Qt</text><path d="M11 21C11 15 15 10 22 8C22 14 18 21 11 21Z" fill="#dcdcdc" stroke="#aaa" stroke-width=".5"/></svg><div class="wi" style="top:415px">LogLatEdit</div><div class="wh" style="top:436px">Phonon<div class="pm" style="left:2px;top:1px;width:8px;height:8px"></div></div><svg style="left:3px;top:451px" width="22" height="20" viewBox="0 0 22 20" ><rect x="0.500" y="0.500" width="21" height="19" rx="2.500" fill="#dcdcdc" stroke="#777"/><rect x="2" y="2" width="18" height="16" rx="1.500" fill="#cfcfcf"/><path d="M8 5L16 10L8 15Z" fill="#1458c8"/></svg><div class="wi" style="top:454px">Phonon::VideoPlayer</div><svg style="left:3px;top:474px" width="22" height="20" viewBox="0 0 22 20" ><path d="M0.500 2.500h21M0.500 0v5M5.700 1v3M11 1v3M16.200 1v3M21.500 0v5" stroke="#888" stroke-width=".7"/><rect x="0" y="11" width="8" height="3" rx="1.500" fill="#2a78e0"/><rect x="14" y="11" width="8" height="3" rx="1.500" fill="#888"/><rect x="8.500" y="6.500" width="6" height="12" rx="1.500" fill="#f4f4f4" stroke="#666"/></svg><div class="wi" style="top:478px">Phonon::SeekSlider</div><svg style="left:3px;top:498px" width="22" height="22" viewBox="0 0 22 22" ><path d="M4 4L17 0V4Z" fill="#555"/><rect x="0" y="12" width="8" height="3" rx="1.500" fill="#2a78e0"/><rect x="14" y="12" width="8" height="3" rx="1.500" fill="#888"/><rect x="8.500" y="7.500" width="6" height="12" rx="1.500" fill="#f4f4f4" stroke="#666"/></svg><div class="wi" style="top:502px">Phonon::VolumeSlider</div><div class="wh" style="top:523px">Qt 3 Support<div class="pm" style="left:2px;top:1px;width:8px;height:8px"></div></div><svg style="left:3px;top:537px" width="22" height="22" viewBox="0 0 22 22" ><rect x="0.5" y="0.500" width="21" height="21" rx="3" fill="url(#q3)" stroke="#5a9418"/><circle cx="9.5" cy="12.500" r="6" fill="none" stroke="#222" stroke-width="2.600"/><path d="M10 12L16 20" stroke="#222" stroke-width="2.600"/><path d="M8 11L11 14" stroke="#222" stroke-width="2"/><text x="15" y="8" font-family="Liberation Sans,sans-serif" font-size="8" font-weight="bold" fill="#222">3</text></svg><div class="wi" style="top:541px">Q3IconView</div><svg style="left:3px;top:561px" width="22" height="22" viewBox="0 0 22 22" ><rect x="0.5" y="0.500" width="21" height="21" rx="3" fill="url(#q3)" stroke="#5a9418"/><circle cx="9.5" cy="12.500" r="6" fill="none" stroke="#222" stroke-width="2.600"/><path d="M10 12L16 20" stroke="#222" stroke-width="2.600"/><path d="M8 11L11 14" stroke="#222" stroke-width="2"/><text x="15" y="8" font-family="Liberation Sans,sans-serif" font-size="8" font-weight="bold" fill="#222">3</text></svg><div class="wi" style="top:565px">Q3GroupBox</div><svg style="left:3px;top:585px" width="22" height="22" viewBox="0 0 22 22" ><rect x="0.5" y="0.500" width="21" height="21" rx="3" fill="url(#q3)" stroke="#5a9418"/><circle cx="9.5" cy="12.500" r="6" fill="none" stroke="#222" stroke-width="2.600"/><path d="M10 12L16 20" stroke="#222" stroke-width="2.600"/><path d="M8 11L11 14" stroke="#222" stroke-width="2"/><text x="15" y="8" font-family="Liberation Sans,sans-serif" font-size="8" font-weight="bold" fill="#222">3</text></svg><div class="wi" style="top:589px">Q3Frame</div><svg style="left:3px;top:609px" width="22" height="22" viewBox="0 0 22 22" ><rect x="0.5" y="0.500" width="21" height="21" rx="3" fill="url(#q3)" stroke="#5a9418"/><circle cx="9.5" cy="12.500" r="6" fill="none" stroke="#222" stroke-width="2.600"/><path d="M10 12L16 20" stroke="#222" stroke-width="2.600"/><path d="M8 11L11 14" stroke="#222" stroke-width="2"/><text x="15" y="8" font-family="Liberation Sans,sans-serif" font-size="8" font-weight="bold" fill="#222">3</text></svg><div class="wi" style="top:613px">Q3WidgetStack</div><div class="sb" style="left:168px;top:21px;height:597px"><div class="sbb" style="top:1px"><svg style="left:3px;top:4px" width="8" height="6"><path d="M0.500 5L4 1.500L7.500 5" stroke="#4d6185" stroke-width="2" fill="none"/></svg></div><div class="sbt" style="top:324px;height:174px"><div class="a" style="left:4px;top:80px;width:6px;height:7px;background:repeating-linear-gradient(#eef4fe 0,#eef4fe 1px,#8cb0f8 1px,#8cb0f8 2px)"></div></div><div class="sbb" style="top:581px"><svg style="left:3px;top:5px" width="8" height="6"><path d="M0.500 1L4 4.500L7.500 1" stroke="#4d6185" stroke-width="2" fill="none"/></svg></div></div></div><div class="a" style="left:261px;top:75px;width:1px;height:618px;background:#3c3c3c"></div>
<div class="a" id="canvas"><div id="form"><div class="gb" style="left:4px;top:10px;width:260px;height:195px"></div><div class="gbt" style="left:12px;top:4px">成像参数</div><div class="gb" style="left:13px;top:30px;width:241px;height:76px"></div><div class="gbt" style="left:22px;top:24px">图像景中心</div><div class="gb" style="left:13px;top:120px;width:241px;height:45px"></div><div class="gbt" style="left:22px;top:114px">成像时间</div><div class="red" style="left:23px;top:44px;width:205px;height:24px"></div><div class="red" style="left:23px;top:74px;width:205px;height:24px"></div><div class="red" style="left:23px;top:134px;width:218px;height:22px"></div><div class="a nw c" style="left:24px;top:50px;line-height:14px">经度：</div><div class="a nw c" style="left:24px;top:80px;line-height:14px">纬度：</div><div class="a nw c" style="left:24px;top:139px;line-height:14px">成像时间：</div><div class="le" style="left:66px;top:46px;width:133px;height:20px;font-family:'Liberation Sans',sans-serif;letter-spacing:0">0</div><div class="le" style="left:66px;top:76px;width:133px;height:20px;font-family:'Liberation Sans',sans-serif;letter-spacing:0">0</div><div class="a" style="left:201px;top:51px;width:4px;height:4px;border:1px solid #000"></div><div class="a" style="left:201px;top:81px;width:4px;height:4px;border:1px solid #000"></div><div class="le" style="left:90px;top:135px;width:150px;height:20px">2000-1-1 00:00:00<div class="a" style="right:1px;top:1px;width:14px;height:16px;background:#c4d2f8;border:1px solid #dce6fc;border-radius:2px"><svg style="left:3px;top:3px" width="7" height="10"><path d="M0.500 3.500L3.500 1L6.500 3.500M0.500 6.500L3.500 9L6.500 6.500" stroke="#4d6185" stroke-width="1.600" fill="none"/></svg></div></div><div class="btn" style="left:229px;top:45px;width:21px;height:21px;line-height:20px;font-size:11px;letter-spacing:2px;padding-left:2px">..</div><div class="btn" style="left:14px;top:175px;width:73px;height:21px;line-height:20px">导入元数据</div><div class="btn" style="left:100px;top:222px;width:73px;height:21px;line-height:20px">确定</div><div class="btn" style="left:181px;top:221px;width:73px;height:21px;line-height:20px">取消</div></div><div class="hd" style="left:7px;top:7px"></div><div class="hd" style="left:7px;top:131px"></div><div class="hd" style="left:7px;top:256px"></div><div class="hd" style="left:142px;top:7px"></div><div class="hd" style="left:142px;top:256px"></div><div class="hd" style="left:277px;top:7px"></div><div class="hd" style="left:277px;top:131px"></div><div class="hd" style="left:277px;top:256px"></div><div class="a nw wm" style="left:90px;top:287px"><b>h</b><b>t</b><b>t</b><b>p</b><b>:</b><b>/</b><b>/</b><b>b</b><b>l</b><b>o</b><b>g</b><b>.</b><b>c</b><b>s</b><b>d</b><b>n</b><b>.</b><b>n</b><b>e</b><b>t</b><b>/</b><b>g</b><b>i</b><b>s</b><b>e</b><b>l</b><b>i</b><b>t</b><b>e</b></div></div>
<div class="a" id="aed"><div class="tbar"><svg style="left:9px;top:4px" width="12" height="16" viewBox="0 0 12 16" ><path d="M0.500 0.500H8L11.500 4V15.500H0.500Z" fill="#f8f0c0" stroke="#b0a878"/><path d="M8 0.500V4H11.500" fill="#fff" stroke="#b0a878" stroke-width=".7"/></svg><svg style="left:34px;top:3px" width="20" height="17" viewBox="0 0 20 17" ><g opacity=".75"><path d="M0.500 3.500H7L10 6V16.500H0.500Z" fill="#e4e0cc" stroke="#a8a490"/><path d="M8.500 0.500H15L18.500 3.500V13.500H10.500V6L8.500 4Z" fill="#e4e0cc" stroke="#a8a490"/></g></svg><svg style="left:64px;top:3px" width="20" height="18" viewBox="0 0 20 18" ><path d="M2 2H14V16H2Z" fill="#d8a020" stroke="#8a6410"/><rect x="5" y="0.500" width="6" height="3" fill="#888"/><path d="M9 6H17L19 8V17.500H9Z" fill="#f4f0d0" stroke="#a09870"/><path d="M3 7C7 6 9 8 10 11L12 9.500L11.500 15L6.500 13.500L8.500 12C7.500 9.500 6 8.500 3 9Z" fill="#2a78e0"/></svg><svg style="left:93px;top:4px" width="17" height="16" viewBox="0 0 17 16" ><g opacity=".8"><path d="M0.500 0.500H11L15.500 4V15.500H0.500Z" fill="#dcd8c4" stroke="#a09c88"/><path d="M4.500 5.500L11 12M11 5.500L4.500 12" stroke="#a8a490" stroke-width="1.800"/></g></svg><svg style="left:121px;top:3px" width="22" height="18" viewBox="0 0 22 18" ><path d="M1 16.500L10 6.500C9 4 10.500 1 14 1L12 3.500L14 5.500L16.500 3.500C16.500 7 13.500 8.500 11.500 7.500L2.500 17.500Z" fill="#a8a8a0" stroke="#d8d8d0" stroke-width=".5"/><path d="M16 11H21L18.500 14Z" fill="#e8e8e8"/></svg><div class="a filt" style="left:179px;top:2px;width:155px;height:21px;line-height:19px">Filter</div></div><div class="tabs"><div class="a nw" style="left:0;top:-1px;width:98px;height:20px;background:#fff;border-bottom:2px solid #f4a020;border-radius:0 0 3px 3px;line-height:22px;padding-left:12px">Action<span class="c">编辑器</span></div><div class="a nw c" style="left:98px;top:0px;width:104px;height:17px;background:#fff;border:1px solid #a8b8cc;border-top:none;border-radius:0 0 3px 3px;line-height:19px;text-align:center">信号和槽编辑器</div></div></div>
<div class="a" id="right"><svg width="0" height="0"><defs><linearGradient id="hb" x1="0" y1="0" x2="1" y2="0"><stop offset="0" stop-color="#7ab4ec"/><stop offset=".5" stop-color="#d4ecff"/><stop offset="1" stop-color="#8cc0f0"/></linearGradient><linearGradient id="gbx" x1="0" y1="0" x2="0" y2="1"><stop offset="0" stop-color="#fff"/><stop offset="1" stop-color="#c8c8c8"/></linearGradient></defs></svg><div class="hdr" style="top:0;height:19px"><span class="c" style="left:4px">对象</span><i style="left:220px"></i><span class="c" style="left:226px">类</span><i style="left:357px"></i></div><div class="tr" style="top:19px;left:20px;width:339px;background:#ece9d8"></div><div class="tr" style="top:35px;background:#e8e8e8"></div><div class="tr" style="top:67px;background:#e8e8e8"></div><div class="tr" style="top:99px;background:#e8e8e8"></div><div class="tr" style="top:131px;background:#e8e8e8"></div><div class="tr" style="top:163px;background:#e8e8e8"></div><div class="vd" style="left:30px;top:35px;height:144px"></div><div class="vd" style="left:50px;top:51px;height:128px"></div><div class="vd" style="left:70px;top:67px;height:112px"></div><div class="vd" style="left:90px;top:83px;height:24px"></div><div class="vd" style="left:90px;top:131px;height:24px"></div><div class="vd" style="left:10px;top:19px;height:4px"></div><div class="hdl" style="left:15px;top:27px;width:6px"></div><div class="pm" style="left:6px;top:23px"></div><svg style="left:23px;top:19px" width="16" height="16" viewBox="0 0 16 16" ><g fill="#5a94dc"><rect x="0" y="0" width="6" height="2.500"/><rect x="7.500" y="0" width="6" height="2.500"/></g><g fill="#7e92bc"><rect x="0" y="4" width="6" height="4"/><rect x="7.500" y="4" width="6" height="4"/><rect x="0" y="9.500" width="6" height="4"/></g><circle cx="11.500" cy="11.500" r="4.300" fill="#cc2c2c" stroke="#941414" stroke-width=".8"/><path d="M9 14L14 9" stroke="#d8b8b8" stroke-width="1.800"/></svg><div class="a nw t1" style="left:45px;top:20px">frmSolarGeoInfo</div><svg style="left:225px;top:20px" width="16" height="15" viewBox="0 0 16 15" ><rect x="0.500" y="0.500" width="15" height="14" fill="#b4c8ea" stroke="#4a7ad0"/><path d="M2 13L13 1M7 14L15 5M1 7L7 1" stroke="#8aa6dc" stroke-width="2"/></svg><div class="a nw t1" style="left:247px;top:20px">QWidget</div><div class="hdl" style="left:35px;top:43px;width:6px"></div><div class="pm" style="left:26px;top:39px"></div><svg style="left:43px;top:35px" width="16" height="16" viewBox="0 0 16 16" ><g fill="#5a94dc"><rect x="0" y="0" width="6" height="2.500"/><rect x="7.500" y="0" width="6" height="2.500"/></g><g fill="#7e92bc"><rect x="0" y="4" width="6" height="4"/><rect x="7.500" y="4" width="6" height="4"/><rect x="0" y="9.500" width="6" height="4"/></g><circle cx="11.500" cy="11.500" r="4.300" fill="#cc2c2c" stroke="#941414" stroke-width=".8"/><path d="M9 14L14 9" stroke="#d8b8b8" stroke-width="1.800"/></svg><div class="a nw t1" style="left:65px;top:36px">groupBox_3</div><svg style="left:225px;top:35px" width="16" height="16" viewBox="0 0 16 16" ><rect x="0.500" y="2.500" width="14" height="12" rx="1.500" fill="url(#gbx)" stroke="#444"/><rect x="3" y="1" width="8" height="3" fill="#111"/><path d="M15.500 5V15.500H3" stroke="#999" fill="none"/></svg><div class="a nw t1" style="left:247px;top:36px">QGroupBox</div><div class="hdl" style="left:55px;top:59px;width:6px"></div><div class="pm" style="left:46px;top:55px"></div><svg style="left:63px;top:51px" width="16" height="16" viewBox="0 0 16 16" ><g fill="#5a94dc"><rect x="0" y="0" width="6" height="2.500"/><rect x="7.500" y="0" width="6" height="2.500"/></g><g fill="#7e92bc"><rect x="0" y="4" width="6" height="4"/><rect x="7.500" y="4" width="6" height="4"/><rect x="0" y="9.500" width="6" height="4"/></g><circle cx="11.500" cy="11.500" r="4.300" fill="#cc2c2c" stroke="#941414" stroke-width=".8"/><path d="M9 14L14 9" stroke="#d8b8b8" stroke-width="1.800"/></svg><div class="a nw t1" style="left:85px;top:52px">groupBox</div><svg style="left:225px;top:51px" width="16" height="16" viewBox="0 0 16 16" ><rect x="0.500" y="2.500" width="14" height="12" rx="1.500" fill="url(#gbx)" stroke="#444"/><rect x="3" y="1" width="8" height="3" fill="#111"/><path d="M15.500 5V15.500H3" stroke="#999" fill="none"/></svg><div class="a nw t1" style="left:247px;top:52px">QGroupBox</div><div class="hdl" style="left:75px;top:75px;width:6px"></div><div class="pm" style="left:66px;top:71px"></div><svg style="left:83px;top:68px" width="14" height="14" viewBox="0 0 14 14" ><g fill="url(#hb)" stroke="#4a78b8" stroke-width=".8"><rect x="0.500" y="0.500" width="3.300" height="12.500" rx="1"/><rect x="5.300" y="0.500" width="3.300" height="12.500" rx="1"/><rect x="10.100" y="0.500" width="3.300" height="12.500" rx="1"/></g></svg><div class="a nw t1" style="left:105px;top:68px">horizontalLayout_2</div><svg style="left:225px;top:68px" width="14" height="14" viewBox="0 0 14 14" ><g fill="url(#hb)" stroke="#4a78b8" stroke-width=".8"><rect x="0.500" y="0.500" width="3.300" height="12.500" rx="1"/><rect x="5.300" y="0.500" width="3.300" height="12.500" rx="1"/><rect x="10.100" y="0.500" width="3.300" height="12.500" rx="1"/></g></svg><div class="a nw t1" style="left:247px;top:68px">QHBoxLayout</div><div class="hdl" style="left:90px;top:91px;width:10px"></div><div class="a nw t1" style="left:102px;top:84px">logLatEdit_2</div><svg style="left:225px;top:83px" width="17" height="16" viewBox="0 0 17 16" ><path d="M0.500 1.500L11 0V13L0.500 14.500Z" fill="#5aa532"/><text x="1.500" y="10.500" font-family="Liberation Sans,sans-serif" font-weight="bold" font-size="10" fill="#fff" textLength="8" lengthAdjust="spacingAndGlyphs">Qt</text><path d="M8 16C8 11 11 8 16 6C16 11 13 16 8 16Z" fill="#dcdcdc" stroke="#aaa" stroke-width=".500"/></svg><div class="a nw t1" style="left:247px;top:84px">LogLatEdit</div><div class="hdl" style="left:90px;top:107px;width:10px"></div><div class="a nw t1" style="left:102px;top:100px">wndTxtLatitude</div><svg style="left:225px;top:100px" width="17" height="15" viewBox="0 0 17 15" ><path d="M2 1C0 5 1 9 4 13" stroke="#444" stroke-width=".6" fill="none"/><path d="M3.500 3L8 0.500L16 8.500L10.500 14L3 7Z" fill="#e89a44" stroke="#222" stroke-width="1"/><path d="M6.500 5.500L9 4L13.500 8.500L10.500 11.500Z" fill="#fff"/></svg><div class="a nw t1" style="left:247px;top:100px">QLabel</div><div class="hdl" style="left:75px;top:123px;width:6px"></div><div class="pm" style="left:66px;top:119px"></div><svg style="left:83px;top:116px" width="14" height="14" viewBox="0 0 14 14" ><g fill="url(#hb)" stroke="#4a78b8" stroke-width=".8"><rect x="0.500" y="0.500" width="3.300" height="12.500" rx="1"/><rect x="5.300" y="0.500" width="3.300" height="12.500" rx="1"/><rect x="10.100" y="0.500" width="3.300" height="12.500" rx="1"/></g></svg><div class="a nw t1" style="left:105px;top:116px">horizontalLayout</div><svg style="left:225px;top:116px" width="14" height="14" viewBox="0 0 14 14" ><g fill="url(#hb)" stroke="#4a78b8" stroke-width=".8"><rect x="0.500" y="0.500" width="3.300" height="12.500" rx="1"/><rect x="5.300" y="0.500" width="3.300" height="12.500" rx="1"/><rect x="10.100" y="0.500" width="3.300" height="12.500" rx="1"/></g></svg><div class="a nw t1" style="left:247px;top:116px">QHBoxLayout</div><div class="hdl" style="left:90px;top:139px;width:10px"></div><div class="a nw t1" style="left:102px;top:132px">label</div><svg style="left:225px;top:132px" width="17" height="15" viewBox="0 0 17 15" ><path d="M2 1C0 5 1 9 4 13" stroke="#444" stroke-width=".6" fill="none"/><path d="M3.500 3L8 0.500L16 8.500L10.500 14L3 7Z" fill="#e89a44" stroke="#222" stroke-width="1"/><path d="M6.500 5.500L9 4L13.500 8.500L10.500 11.500Z" fill="#fff"/></svg><div class="a nw t1" style="left:247px;top:132px">QLabel</div><div class="hdl" style="left:90px;top:155px;width:10px"></div><div class="a nw t1" style="left:102px;top:148px">logLatEdit</div><svg style="left:225px;top:147px" width="17" height="16" viewBox="0 0 17 16" ><path d="M0.500 1.500L11 0V13L0.500 14.500Z" fill="#5aa532"/><text x="1.500" y="10.500" font-family="Liberation Sans,sans-serif" font-weight="bold" font-size="10" fill="#fff" textLength="8" lengthAdjust="spacingAndGlyphs">Qt</text><path d="M8 16C8 11 11 8 16 6C16 11 13 16 8 16Z" fill="#dcdcdc" stroke="#aaa" stroke-width=".500"/></svg><div class="a nw t1" style="left:247px;top:148px">LogLatEdit</div><div class="hdl" style="left:70px;top:171px;width:10px"></div><div class="a nw t1" style="left:82px;top:164px">pushButton</div><svg style="left:225px;top:164px" width="16" height="15" viewBox="0 0 16 15" ><rect x="0.500" y="0.500" width="14" height="13" rx="1.500" fill="url(#gbx)" stroke="#555"/><path d="M15.500 3V14.500H3" stroke="#999" fill="none"/><text x="2" y="9.500" font-family="Liberation Sans,sans-serif" font-weight="bold" font-size="6" fill="#444">OK</text></svg><div class="a nw t1" style="left:247px;top:164px">QPushButton</div><div class="sb" style="left:359px;top:0;height:180px"><div class="sbb" style="top:1px"><svg style="left:3px;top:4px" width="8" height="6"><path d="M0.500 5L4 1.500L7.500 5" stroke="#4d6185" stroke-width="2" fill="none"/></svg></div><div class="sbt" style="top:18px;height:85px"><div class="a" style="left:4px;top:38px;width:6px;height:7px;background:repeating-linear-gradient(#eef4fe 0,#eef4fe 1px,#8cb0f8 1px,#8cb0f8 2px)"></div></div><div class="sbb" style="top:163px"><svg style="left:3px;top:5px" width="8" height="6"><path d="M0.500 1L4 4.500L7.500 1" stroke="#4d6185" stroke-width="2" fill="none"/></svg></div></div><div class="a" style="left:0;top:180px;width:376px;height:24px;background:linear-gradient(#222 0,#626262 1px,#505050 50%,#3c3c3c 22px,#222 23px)"></div><div class="a filt" style="left:0px;top:181px;width:306px;height:22px;line-height:20px">Filter</div><svg style="left:309px;top:184px" width="16" height="15" viewBox="0 0 16 15" ><path d="M5 0H9V5H14V9H9V14H5V9H0V5H5Z" fill="#3cc81e" stroke="#1a8a0a" stroke-width=".6"/><path d="M10 11H16L13 14.500Z" fill="#e8e8e8"/></svg><svg style="left:333px;top:190px" width="15" height="4" viewBox="0 0 15 4" ><rect x="0" y="0" width="15" height="3.500" rx="1" fill="#b8b6a4"/></svg><svg style="left:354px;top:183px" width="18" height="18" viewBox="0 0 18 18" ><path d="M1 15.500L9 6.500C8 4 9.500 1 13 1L11 3.500L13 5.500L15.500 3.500C15.500 7 12.500 8.500 10.500 7.500L2.500 16.500Z" fill="#a8a8a0" stroke="#d8d8d0" stroke-width=".5"/><path d="M12 11H17L14.500 14Z" fill="#e8e8e8"/></svg><div class="a nw" style="left:0;top:204px;width:376px;height:17px;background:#ece9d8;line-height:19px;padding-left:3px;border-bottom:1px solid #d4d0c0">frmSolarGeoInfo : QWidget</div><div class="hdr" style="top:221px;height:20px"><span class="c" style="left:4px;top:4px">属性</span><i style="left:125px;top:3px"></i><span class="c" style="left:131px;top:4px">值</span><i style="left:357px;top:3px"></i></div><div class="pr" style="top:241px;height:17px;background:#a8a598;border-bottom:none"><div class="pm" style="left:5px;top:3px"></div><span style="left:23px;top:2px;color:#fff;font-weight:bold;letter-spacing:-0.2px">QObject</span></div><div class="pr" style="top:258px;height:17px;background:#ffede0"><i></i><span style="left:23px;top:2px;font-weight:bold;letter-spacing:-0.2px;">objectName</span><span style="left:132px;top:2px;">frmSolarGeoInfo</span></div><div class="pr" style="top:275px;height:17px;background:#a8a598;border-bottom:none"><div class="pm" style="left:5px;top:3px"></div><span style="left:23px;top:2px;color:#fff;font-weight:bold;letter-spacing:-0.2px">QWidget</span></div><div class="pr" style="top:292px;height:17px;background:#ffffde"><i></i><span style="left:23px;top:2px;">windowModality</span><span style="left:132px;top:2px;">NonModal</span></div><div class="pr" style="top:309px;height:17px;background:#ffffbf"><i></i><span style="left:23px;top:2px;">enabled</span><div class="a" style="left:131px;top:2px;width:13px;height:13px;border:1px solid #1c5180;background:linear-gradient(135deg,#dcdcd7,#fff)"><svg style="left:1px;top:1px" width="9" height="9"><path d="M1 4L3.500 6.500L8 1.500" stroke="#21a121" stroke-width="2" fill="none"/></svg></div></div><div class="pr" style="top:326px;height:16px;background:#ffffde"><i></i><div class="pm" style="left:5px;top:3px"></div><span style="left:23px;top:1px;font-weight:bold;letter-spacing:-0.2px;">geometry</span><span style="left:132px;top:1px;">[(0, 0), 268 x 247]</span></div><div class="pr" style="top:342px;height:16px;background:#ffffbf"><i></i><span style="left:43px;top:1px;color:#808080;">X</span><span style="left:132px;top:1px;color:#808080;">0</span></div><div class="pr" style="top:358px;height:16px;background:#ffffde"><i></i><span style="left:43px;top:1px;color:#808080;">Y</span><span style="left:132px;top:1px;color:#808080;">0</span></div><div class="pr" style="top:374px;height:16px;background:#ffffbf"><i></i><span style="left:43px;top:1px;"><span class="c">宽度</span></span><span style="left:132px;top:1px;">268</span></div><div class="pr" style="top:390px;height:16px;background:#ffffde"><i></i><span style="left:43px;top:1px;"><span class="c">高度</span></span><span style="left:132px;top:1px;">247</span></div><div class="pr" style="top:406px;height:16px;background:#ffffbf"><i></i><div class="pm plus" style="left:5px;top:3px"></div><span style="left:23px;top:1px;">sizePolicy</span><span style="left:132px;top:1px;">[Preferred, Preferred, 0, 0]</span></div><div class="pr" style="top:422px;height:16px;background:#ffffde"><i></i><div class="pm" style="left:5px;top:3px"></div><span style="left:23px;top:1px;font-weight:bold;letter-spacing:-0.2px;">minimumSize</span><span style="left:132px;top:1px;">0 x 0</span></div><div class="pr" style="top:438px;height:16px;background:#ffffbf"><i></i><span style="left:43px;top:1px;"><span class="c">宽度</span></span><span style="left:132px;top:1px;">0</span></div><div class="pr" style="top:454px;height:16px;background:#ffffde"><i></i><span style="left:43px;top:1px;"><span class="c">高度</span></span><span style="left:132px;top:1px;">0</span></div><div class="pr" style="top:470px;height:16px;background:#ffffbf"><i></i><div class="pm" style="left:5px;top:3px"></div><span style="left:23px;top:1px;font-weight:bold;letter-spacing:-0.2px;">maximumSize</span><span style="left:132px;top:1px;">407 x 300</span></div><div class="pr" style="top:486px;height:16px;background:#ffffde"><i></i><span style="left:43px;top:1px;"><span class="c">宽度</span></span><span style="left:132px;top:1px;">407</span></div><div class="pr" style="top:502px;height:16px;background:#ffffbf"><i></i><span style="left:43px;top:1px;"><span class="c">高度</span></span><span style="left:132px;top:1px;">300</span></div><div class="pr" style="top:518px;height:16px;background:#ffffde"><i></i><div class="pm" style="left:5px;top:3px"></div><span style="left:23px;top:1px;">sizeIncrement</span><span style="left:132px;top:1px;">0 x 0</span></div><div class="pr" style="top:534px;height:16px;background:#ffffbf"><i></i><span style="left:43px;top:1px;"><span class="c">宽度</span></span><span style="left:132px;top:1px;">0</span></div><div class="pr" style="top:550px;height:16px;background:#ffffde"><i></i><span style="left:43px;top:1px;"><span class="c">高度</span></span><span style="left:132px;top:1px;">0</span></div><div class="pr" style="top:566px;height:16px;background:#ffffbf"><i></i><div class="pm plus" style="left:5px;top:3px"></div><span style="left:23px;top:1px;">baseSize</span><span style="left:132px;top:1px;">0 x 0</span></div><div class="pr" style="top:582px;height:16px;background:#ffffde"><i></i><span style="left:23px;top:1px;">palette</span><span style="left:132px;top:1px;"><span class="c">继承</span></span></div><div class="pr" style="top:598px;height:20px;background:#ffffbf"><i></i><div class="pm plus" style="left:5px;top:5px"></div><span style="left:23px;top:3px;">font</span><span style="left:134px;top:3px;font:15px/14px 'Liberation Serif',serif;letter-spacing:0">A</span><span style="left:156px;top:3px">[<span class="c">宋体</span>, 9]</span></div><div class="vd" style="left:10px;top:258px;height:9px;opacity:.7"></div><div class="hdl" style="left:10px;top:267px;width:10px;opacity:.7"></div><div class="vd" style="left:10px;top:292px;height:326px;opacity:.7"></div><div class="hdl" style="left:10px;top:301px;width:10px;opacity:.7"></div><div class="hdl" style="left:10px;top:317px;width:10px;opacity:.7"></div><div class="hdl" style="left:10px;top:590px;width:10px;opacity:.7"></div><div class="hdl" style="left:15px;top:334px;width:5px;opacity:.7"></div><div class="hdl" style="left:15px;top:414px;width:5px;opacity:.7"></div><div class="hdl" style="left:15px;top:430px;width:5px;opacity:.7"></div><div class="hdl" style="left:15px;top:478px;width:5px;opacity:.7"></div><div class="hdl" style="left:15px;top:526px;width:5px;opacity:.7"></div><div class="hdl" style="left:15px;top:574px;width:5px;opacity:.7"></div><div class="hdl" style="left:15px;top:608px;width:5px;opacity:.7"></div><div class="vd" style="left:30px;top:342px;height:56px;opacity:.7"></div><div class="hdl" style="left:30px;top:350px;width:10px;opacity:.7"></div><div class="hdl" style="left:30px;top:366px;width:10px;opacity:.7"></div><div class="hdl" style="left:30px;top:382px;width:10px;opacity:.7"></div><div class="hdl" style="left:30px;top:398px;width:10px;opacity:.7"></div><div class="vd" style="left:30px;top:438px;height:24px;opacity:.7"></div><div class="hdl" style="left:30px;top:446px;width:10px;opacity:.7"></div><div class="hdl" style="left:30px;top:462px;width:10px;opacity:.7"></div><div class="vd" style="left:30px;top:486px;height:24px;opacity:.7"></div><div class="hdl" style="left:30px;top:494px;width:10px;opacity:.7"></div><div class="hdl" style="left:30px;top:510px;width:10px;opacity:.7"></div><div class="vd" style="left:30px;top:534px;height:24px;opacity:.7"></div><div class="hdl" style="left:30px;top:542px;width:10px;opacity:.7"></div><div class="hdl" style="left:30px;top:558px;width:10px;opacity:.7"></div><div class="sb" style="left:359px;top:221px;height:397px"><div class="sbb" style="top:1px"><svg style="left:3px;top:4px" width="8" height="6"><path d="M0.500 5L4 1.500L7.500 5" stroke="#4d6185" stroke-width="2" fill="none"/></svg></div><div class="sbt" style="top:18px;height:134px"><div class="a" style="left:4px;top:62px;width:6px;height:7px;background:repeating-linear-gradient(#eef4fe 0,#eef4fe 1px,#8cb0f8 1px,#8cb0f8 2px)"></div></div><div class="sbb" style="top:380px"><svg style="left:3px;top:5px" width="8" height="6"><path d="M0.500 1L4 4.500L7.500 1" stroke="#4d6185" stroke-width="2" fill="none"/></svg></div></div></div>
<div class="a" style="left:82px;top:698px;width:15px;height:14px;background:#d8d4c4;border:1px solid #f0eee4"><div class="a" style="left:3px;top:2px;width:7px;height:8px;background:#222"></div></div><div class="a nw" style="left:107px;top:697px;width:199px;height:19px;background:#fff;border:1px solid #222;border-radius:3px;box-shadow:inset 0 1px 1px #999;color:#8c8c8c;line-height:20px;padding-left:27px"><span class="c">输入以定位</span> (Ctrl+K)</div><svg style="left:113px;top:700px" width="16" height="13" viewBox="0 0 16 13" ><circle cx="7" cy="4.500" r="3.500" fill="none" stroke="#555" stroke-width="1.500"/><path d="M4.500 7.500L1 11.500" stroke="#555" stroke-width="1.800"/><path d="M12 6H16L14 8.500Z" fill="#555"/></svg><div class="a" style="left:318px;top:697px;width:48px;height:19px;border:1px solid #7e7e7e;border-radius:3px;background:#5c5c5c;overflow:hidden"><div class="a" style="left:0;top:0;width:16px;height:17px;background:linear-gradient(#686868,#565656);color:#fff;text-align:center;line-height:18px;font-family:'Liberation Sans',sans-serif;font-size:12px;letter-spacing:0">1</div><div class="a nw" style="left:16px;top:-1px;right:-1px;height:19px;background:linear-gradient(#e6e6e6,#d0d0d0 50%,#c0c0c0);text-align:center;line-height:21px"><span class="c">问题</span></div></div><div class="a" style="left:372px;top:697px;width:73px;height:19px;border:1px solid #7e7e7e;border-radius:3px;background:#5c5c5c;overflow:hidden"><div class="a" style="left:0;top:0;width:16px;height:17px;background:linear-gradient(#686868,#565656);color:#fff;text-align:center;line-height:18px;font-family:'Liberation Sans',sans-serif;font-size:12px;letter-spacing:0">2</div><div class="a nw" style="left:16px;top:-1px;right:-1px;height:19px;background:linear-gradient(#e6e6e6,#d0d0d0 50%,#c0c0c0);text-align:center;line-height:21px"><span class="c">搜索结果</span></div></div><div class="a" style="left:449px;top:697px;width:96px;height:19px;border:1px solid #7e7e7e;border-radius:3px;background:#5c5c5c;overflow:hidden"><div class="a" style="left:0;top:0;width:16px;height:17px;background:linear-gradient(#686868,#565656);color:#fff;text-align:center;line-height:18px;font-family:'Liberation Sans',sans-serif;font-size:12px;letter-spacing:0">3</div><div class="a nw" style="left:16px;top:-1px;right:-1px;height:19px;background:linear-gradient(#e6e6e6,#d0d0d0 50%,#c0c0c0);text-align:center;line-height:21px"><span class="c">应用程序输出</span></div></div><div class="a" style="left:552px;top:697px;width:70px;height:19px;border:1px solid #7e7e7e;border-radius:3px;background:#5c5c5c;overflow:hidden"><div class="a" style="left:0;top:0;width:16px;height:17px;background:linear-gradient(#686868,#565656);color:#fff;text-align:center;line-height:18px;font-family:'Liberation Sans',sans-serif;font-size:12px;letter-spacing:0">4</div><div class="a nw" style="left:16px;top:-1px;right:-1px;height:19px;background:linear-gradient(#e6e6e6,#d0d0d0 50%,#c0c0c0);text-align:center;line-height:21px"><span class="c">编译输出</span></div></div><div class="a" style="left:629px;top:697px;width:110px;height:19px;border:1px solid #7e7e7e;border-radius:3px;background:#5c5c5c;overflow:hidden"><div class="a" style="left:0;top:0;width:16px;height:17px;background:linear-gradient(#686868,#565656);color:#fff;text-align:center;line-height:18px;font-family:'Liberation Sans',sans-serif;font-size:12px;letter-spacing:0">5</div><div class="a nw" style="left:16px;top:-1px;right:-1px;height:19px;background:linear-gradient(#e6e6e6,#d0d0d0 50%,#c0c0c0);text-align:center;line-height:21px">QML/JS Console</div></div><div class="a" style="left:744px;top:697px;width:15px;height:19px;border:1px solid #8a8a8a;border-radius:3px;background:linear-gradient(#6c6c6c,#585858)"><svg style="left:3px;top:3px" width="8" height="11"><path d="M0 4.500L4 0.500L8 4.500ZM0 6.500L4 10.500L8 6.500Z" fill="#f4f4f4"/></svg></div><div class="a" style="left:942px;top:697px;width:12px;height:19px;background:#2a2a2a"><svg style="left:2px;top:5px" width="8" height="5"><path d="M0 5L4 0L8 5Z" fill="#fff"/></svg></div><svg style="left:961px;top:706px" width="13" height="13" viewBox="0 0 13 13" ><path d="M12 1L1 12M12 5L5 12M12 9L9 12" stroke="#7a7a7a" stroke-width="1"/></svg><div class="a" style="left:598px;top:355px;width:60px;height:30px;overflow:hidden;opacity:.13"><div class="a nw wm" style="left:-246px;top:6px;color:#555"><b>h</b><b>t</b><b>t</b><b>p</b><b>:</b><b>/</b><b>/</b><b>b</b><b>l</b><b>o</b><b>g</b><b>.</b><b>c</b><b>s</b><b>d</b><b>n</b><b>.</b><b>n</b><b>e</b><b>t</b><b>/</b><b>g</b><b>i</b><b>s</b><b>e</b><b>l</b><b>i</b><b>t</b><b>e</b></div></div>
</body></html>
